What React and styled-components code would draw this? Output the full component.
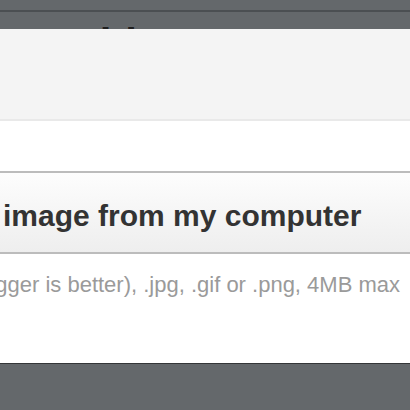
import React from "react";
import styled, { createGlobalStyle } from "styled-components";

const GlobalStyle = createGlobalStyle`
  html, body {
    margin: 0;
    padding: 0;
    background: #64686b;
  }
  body {
    font-family: "Liberation Sans", Arial, Helvetica, sans-serif;
  }
`;

const Page = styled.div`
  position: relative;
  min-height: 100vh;
  overflow: hidden;
  background: #64686b;
`;

const TopBar = styled.div`
  height: 10px;
  border-bottom: 2px solid #4b4f52;
`;

const Heading = styled.h1`
  margin: 8px 0 0 39px;
  font-size: 42px;
  font-weight: bold;
  line-height: normal;
  color: #1f1f1f;
  white-space: nowrap;
`;

// the dialog is wider than the window, only its middle shows
const Modal = styled.div`
  position: absolute;
  top: 29px;
  left: -300px;
  right: -140px;
  height: 334px;
  display: flex;
  flex-direction: column;
  background: #fff;
  border-bottom: 1px solid #343638;
`;

const ModalHeader = styled.div`
  height: 90px;
  background: #f4f4f4;
  border-bottom: 2px solid #e9e9e9;
`;

const Spacer = styled.div`
  height: ${(p) => p.$h}px;
  background: #fff;
`;

const UploadButton = styled.button`
  display: flex;
  align-items: center;
  height: 83px;
  box-sizing: border-box;
  margin: 0;
  padding: 6px 0 0 193px;
  border: 0;
  border-top: 2px solid #bcbcbc;
  border-bottom: 2px solid #bcbcbc;
  background: linear-gradient(#fdfdfd, #eeeeee);
  font-family: "Liberation Sans", Arial, Helvetica, sans-serif;
  font-size: 30px;
  font-weight: bold;
  color: #333;
  white-space: nowrap;
  text-align: left;
  cursor: pointer;
`;

const Hint = styled.p`
  margin: 0;
  padding: 18px 0 0 25px;
  font-size: 22px;
  line-height: normal;
  color: #9a9a9a;
  white-space: nowrap;
`;

export default function App() {
  return (
    <>
      <GlobalStyle />
      <Page>
        <TopBar />
        <Heading>Is this you</Heading>
        <Modal>
          <ModalHeader />
          <Spacer $h={50} />
          <UploadButton type="button">Upload image from my computer</UploadButton>
          <Hint>
            Recommended 200x200 (bigger is better), .jpg, .gif or .png, 4MB max
          </Hint>
        </Modal>
      </Page>
    </>
  );
}
